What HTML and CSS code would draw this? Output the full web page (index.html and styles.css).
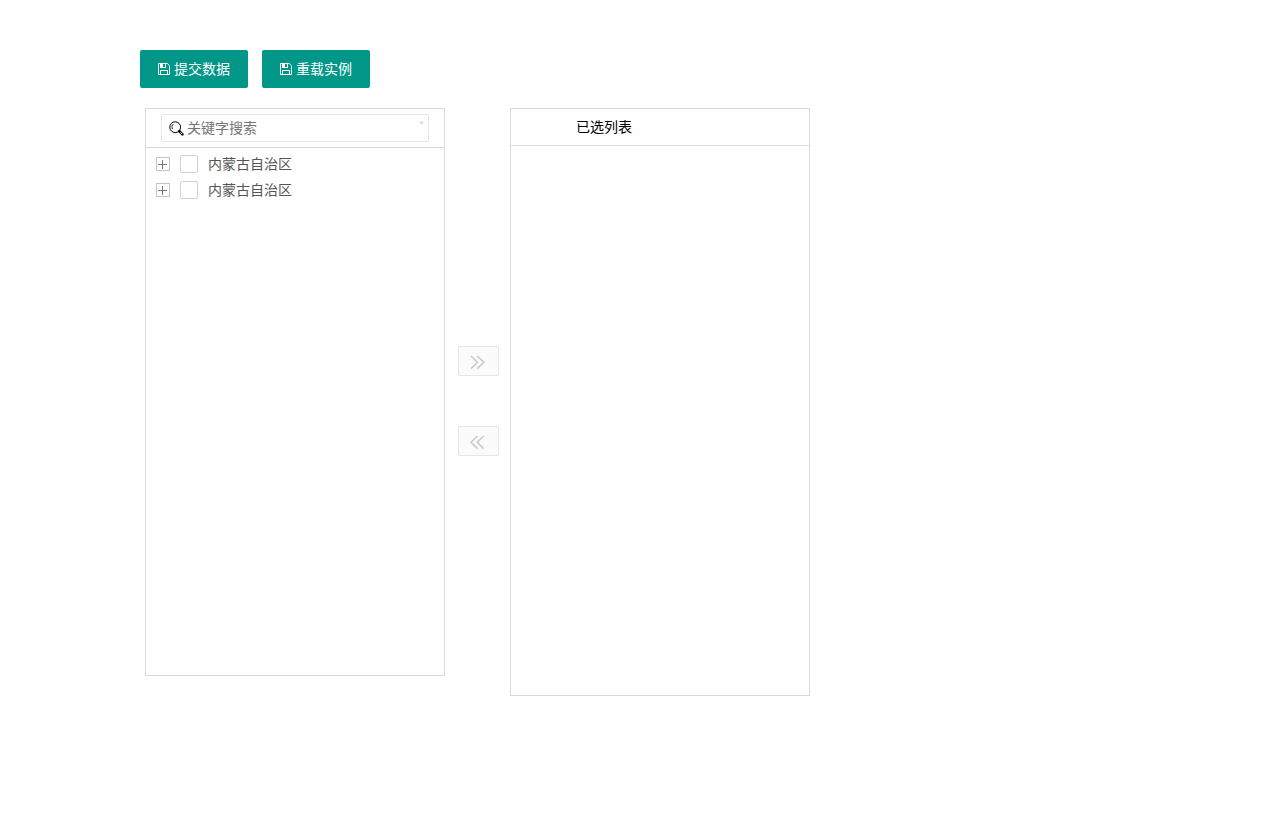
FILE: index.html
```
<!DOCTYPE html>
<html lang="zh-CN">

<head>
    <meta charset="UTF-8" />
    <meta name="viewport" content="width=device-width, initial-scale=1">
    <title>树形穿梭框</title>
    <link rel="stylesheet" href="styles.css">
</head>

<body>
    <svg class="sprite" aria-hidden="true">
        <symbol id="icon-save" viewBox="0 0 14 14">
            <path d="M1.5 1.5h8.8l2.2 2.2v8.8h-11z" fill="none" stroke="currentColor" />
            <path d="M3.5 12.5v-4h7v4M8.5 1.5v4" fill="none" stroke="currentColor" />
            <path d="M3 1h3v5H3zM3 5h6v1H3z" fill="currentColor" />
        </symbol>
        <symbol id="icon-search" viewBox="0 0 16 16">
            <circle cx="6.2" cy="7.2" r="5.4" fill="none" stroke="currentColor" />
            <path d="M4.2 4.2a3.7 3.7 0 0 0-.6 5" fill="none" stroke="currentColor" stroke-width=".8" />
            <path d="M10.2 11.2l3.2 3.2" fill="none" stroke="currentColor" stroke-width="2.6" stroke-linecap="round" />
            <path d="M11.4 12.4l1.8 1.8" fill="none" stroke="#fff" stroke-width="1" />
        </symbol>
        <symbol id="icon-right" viewBox="0 0 16 16">
            <path d="M2 2l6.5 6.3L2 14.6M8.2 2l6.5 6.3-6.5 6.3" fill="none" stroke="currentColor" stroke-width="1.6" />
        </symbol>
        <symbol id="icon-left" viewBox="0 0 16 16">
            <path d="M8.5 2L2 8.3l6.5 6.3M14.7 2L8.2 8.3l6.5 6.3" fill="none" stroke="currentColor" stroke-width="1.6" />
        </symbol>
    </svg>

    <div class="container">
        <div class="toolbar">
            <button type="button" class="btn"><svg class="icon-save"><use href="#icon-save" /></svg>提交数据</button>
            <button type="button" class="btn"><svg class="icon-save"><use href="#icon-save" /></svg>重载实例</button>
        </div>

        <div class="transfer">
            <div class="panel">
                <div class="panel-search">
                    <div class="search-box">
                        <svg class="icon-search"><use href="#icon-search" /></svg>
                        <input type="text" placeholder="关键字搜索" aria-label="关键字搜索">
                        <button type="button" class="clear" aria-label="清空">×</button>
                    </div>
                </div>
                <ul class="tree">
                    <li>
                        <button type="button" class="spread" aria-label="展开"></button>
                        <input type="checkbox" id="node-1">
                        <label for="node-1">内蒙古自治区</label>
                    </li>
                    <li>
                        <button type="button" class="spread" aria-label="展开"></button>
                        <input type="checkbox" id="node-2">
                        <label for="node-2">内蒙古自治区</label>
                    </li>
                </ul>
            </div>

            <div class="actions">
                <button type="button" class="move" aria-label="右移" disabled><svg><use href="#icon-right" /></svg></button>
                <button type="button" class="move" aria-label="左移" disabled><svg><use href="#icon-left" /></svg></button>
            </div>

            <div class="panel panel-selected">
                <div class="panel-title">已选列表</div>
            </div>
        </div>
    </div>
</body>

</html>
```

FILE: styles.css
```
* {
    box-sizing: border-box;
}

body {
    margin: 0;
    background: #fff;
    color: #000;
    font: 14px/24px "Liberation Sans", "Noto Sans CJK SC", sans-serif;
}

button,
input {
    margin: 0;
    font: inherit;
}

.sprite {
    display: none;
}

.container {
    max-width: 1000px;
    margin: 50px auto;
}

.toolbar {
    display: flex;
    gap: 14px;
    margin-bottom: 20px;
}

.btn {
    display: flex;
    align-items: center;
    gap: 3px;
    height: 38px;
    padding: 0 18px 0 17px;
    border: none;
    border-radius: 2px;
    background: #009688;
    color: #fff;
    cursor: pointer;
}

.btn:hover {
    opacity: 0.8;
}

.icon-save {
    width: 14px;
    height: 14px;
}

.transfer {
    display: flex;
    align-items: flex-start;
    padding-left: 5px;
}

.panel {
    width: 300px;
    min-height: 568px;
    border: 1px solid #d9d9d9;
}

.panel-selected {
    min-height: 588px;
}

.panel-search {
    padding: 5px 15px;
    border-bottom: 1px solid #d9d9d9;
}

.search-box {
    display: flex;
    align-items: center;
    height: 28px;
    padding: 0 4px 0 7px;
    border: 1px solid #e6e6e6;
    border-radius: 2px;
}

.icon-search {
    flex: none;
    width: 16px;
    height: 16px;
}

.search-box input {
    flex: 1;
    min-width: 0;
    padding: 0 2px;
    border: none;
    outline: none;
    background: none;
}

.search-box input::placeholder {
    color: #757575;
}

.clear {
    align-self: flex-start;
    padding: 0;
    border: none;
    background: none;
    color: #c2c2c2;
    font-size: 8px;
    line-height: 16px;
    cursor: pointer;
}

.tree {
    margin: 0;
    padding: 3px 10px;
    list-style: none;
}

.tree li {
    display: flex;
    align-items: center;
    gap: 10px;
    height: 26px;
    color: #555;
}

.spread {
    width: 14px;
    height: 14px;
    padding: 0;
    border: 1px solid #c0c4cc;
    background:
        linear-gradient(#777, #777) 1px 6px / 9px 1px no-repeat,
        linear-gradient(#777, #777) 5px 2px / 1px 9px no-repeat;
    cursor: pointer;
}

.tree input {
    appearance: none;
    width: 18px;
    height: 18px;
    margin: 0;
    border: 1px solid #d2d2d2;
    border-radius: 2px;
    background: #fff;
}

.tree input:checked {
    border-color: #009688;
    background: #009688;
}

.actions {
    display: flex;
    flex-direction: column;
    gap: 50px;
    width: 65px;
    padding: 238px 0 0 13px;
}

.move {
    display: flex;
    align-items: center;
    width: 41px;
    height: 30px;
    padding: 2px 10px 0;
    border: 1px solid #e6e6e6;
    border-radius: 2px;
    background: #fbfbfb;
    color: #c9c9c9;
}

.move svg {
    width: 16px;
    height: 16px;
}

.panel-title {
    height: 37px;
    padding-left: 65px;
    border-bottom: 1px solid #d9d9d9;
    line-height: 36px;
}
```
